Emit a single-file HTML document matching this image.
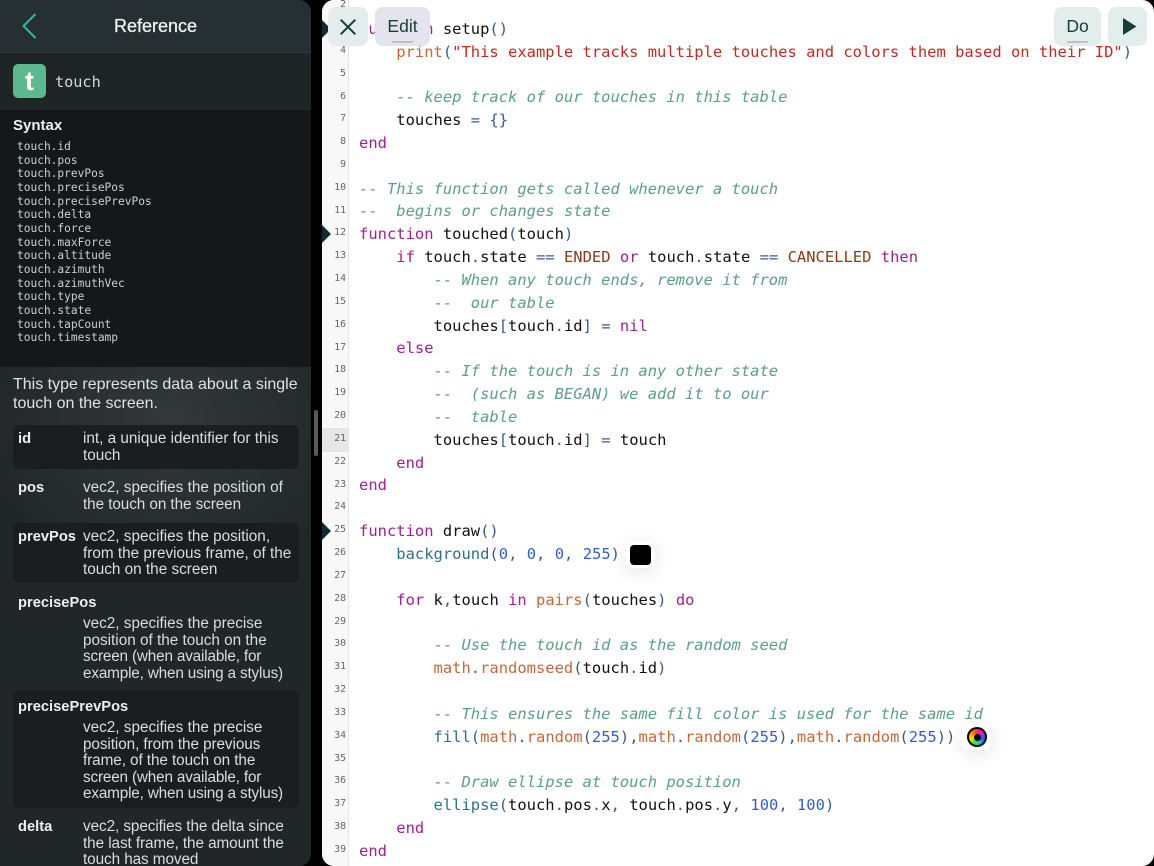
<!DOCTYPE html>
<html><head><meta charset="utf-8">
<style>
html,body{margin:0;padding:0;background:#000;width:1154px;height:866px;overflow:hidden}
*{box-sizing:border-box}
.a{position:absolute;white-space:nowrap}
#left{position:absolute;left:0;top:0;width:311px;height:866px;border-radius:0 12px 12px 0;overflow:hidden;background:radial-gradient(ellipse 190px 170px at 170px 420px,#33383a,#212629 100%),#212629;font-family:"Liberation Sans",sans-serif;color:#e4e4e4}
.row{position:absolute;left:13px;width:286px;background:#1b1e21;border-radius:6px}
.t{position:absolute;white-space:nowrap;font-size:15.3px;line-height:16.5px;color:#dcdcdc}
.b{position:absolute;left:18px;white-space:nowrap;font-size:14.7px;line-height:16.5px;font-weight:bold;color:#eee}
.x1{letter-spacing:-.17px}.x2{letter-spacing:-.08px}
#syn{position:absolute;left:17px;top:140px;font-family:"DejaVu Sans Mono",monospace;font-size:11.2px;line-height:13.65px;color:#c9d0d2;white-space:pre}
#ed{position:absolute;left:322px;top:0;width:832px;height:866px;background:#fff;border-radius:12px;overflow:hidden}
#gut{position:absolute;left:0;top:0;width:27px;height:866px;background:#f8f8f8;border-right:1px solid #e6e6e6}
#hl{position:absolute;left:0;top:428px;width:27px;height:24px;background:#e6e6e6}
#nums{position:absolute;left:0;top:-5.8px;width:26px;text-align:right;padding-right:2px;font-family:"DejaVu Sans Mono",monospace;font-size:9.8px;line-height:22.83px;color:#666;white-space:pre}
#code{position:absolute;left:37px;top:-5px;font-family:"DejaVu Sans Mono",monospace;font-size:15.48px;line-height:22.83px;color:#111;white-space:pre}
.k{color:#a0208e}.c{color:#5a9f86;font-style:italic}.s{color:#c22a20}.f{color:#c4673a}.g{color:#2d6f8e}.n{color:#2f5cd0}.p{color:#3d5a8c}.o{color:#8a3a1a}
.tri{position:absolute;left:322px;width:0;height:0;border-left:9px solid #0f2c32;border-top:9px solid transparent;border-bottom:9px solid transparent}
.btn{position:absolute;top:7px;height:39px;border-radius:8px;background:#e3edeb;color:#173f36;font-family:"Liberation Sans",sans-serif;font-size:17.5px;text-align:center;line-height:39px}
.bar{position:absolute;top:34px;height:2px;background:#b8c2c2;border-radius:1px}
.pop{position:absolute;background:#fff;border-radius:6px;box-shadow:0 4px 18px rgba(0,0,0,.1)}
.pop:before{content:"";position:absolute;left:-4px;top:9px;width:0;height:0;border-right:4px solid #fff;border-top:4px solid transparent;border-bottom:4px solid transparent}
</style></head><body>
<div id="left">
 <div style="position:absolute;left:0;top:0;width:311px;height:53px;background:#262f31;border-bottom:1px solid #31393b"></div>
 <svg style="position:absolute;left:20px;top:12px" width="20" height="28" viewBox="0 0 20 28"><path d="M15.5 2 L3.5 14 L15.5 26" fill="none" stroke="#2fb8a6" stroke-width="2"/></svg>
 <div class="a" style="left:0;width:311px;text-align:center;top:15px;font-size:18px;line-height:22px;color:#f0f0f0;-webkit-text-stroke:.3px #f0f0f0">Reference</div>
 <div style="position:absolute;left:0;top:53px;width:311px;height:57px;background:#1f2426"></div>
 <div style="position:absolute;left:13px;top:64px;width:33px;height:34px;border-radius:5px;background:#5cb98d"></div>
 <div class="a" style="left:13px;width:33px;text-align:center;top:64px;font-size:27px;line-height:34px;font-weight:bold;color:#fff">t</div>
 <div class="a" style="left:55px;top:71.5px;font-family:'DejaVu Sans Mono',monospace;font-size:15.2px;line-height:21px;color:#d8d8d8">touch</div>
 <div style="position:absolute;left:0;top:110px;width:311px;height:257px;background:#15181b"></div>
 <div class="a" style="left:13px;top:116.5px;font-size:15px;line-height:18px;font-weight:bold;color:#f0f0f0">Syntax</div>
 <div id="syn">touch.id
touch.pos
touch.prevPos
touch.precisePos
touch.precisePrevPos
touch.delta
touch.force
touch.maxForce
touch.altitude
touch.azimuth
touch.azimuthVec
touch.type
touch.state
touch.tapCount
touch.timestamp</div>
 <div class="a" style="left:13px;top:376px;font-size:16px;line-height:18.6px;color:#e2e2e2">This type represents data about a single<br>touch on the screen.</div>

 <div class="row" style="top:425px;height:44px"></div>
 <div class="row" style="top:523px;height:60px"></div>
 <div class="row" style="top:691px;height:117px"></div>

 <div class="b" style="top:431px">id</div>
 <div class="t" style="left:83px;top:431px">int, a unique identifier for this<br>touch</div>
 <div class="b" style="top:480px">pos</div>
 <div class="t" style="left:83px;top:480px">vec2, specifies the position of<br><span class="x2">the touch on the screen</span></div>
 <div class="b" style="top:529px">prevPos</div>
 <div class="t" style="left:83px;top:529px">vec2, specifies the position,<br>from the previous frame, of the<br>touch on the screen</div>
 <div class="b" style="top:595px">precisePos</div>
 <div class="t" style="left:83px;top:616px">vec2, specifies the precise<br>position of the touch on the<br><span class="x1">screen (when available, for</span><br><span class="x1">example, when using a stylus)</span></div>
 <div class="b" style="top:699px">precisePrevPos</div>
 <div class="t" style="left:83px;top:720px">vec2, specifies the precise<br><span class="x2">position, from the previous</span><br><span class="x2">frame, of the touch on the</span><br><span class="x1">screen (when available, for</span><br><span class="x1">example, when using a stylus)</span></div>
 <div class="b" style="top:819px">delta</div>
 <div class="t x2" style="left:83px;top:819px">vec2, specifies the delta since<br>the last frame, the amount the<br>touch has moved</div>
</div>
<div style="position:absolute;left:314px;top:410px;width:4px;height:46px;border-radius:2px;background:#5a5a5a"></div>

<div id="ed">
 <div id="gut"></div>
 <div id="hl"></div>
 <div id="nums">2
3
4
5
6
7
8
9
10
11
12
13
14
15
16
17
18
19
20
21
22
23
24
25
26
27
28
29
30
31
32
33
34
35
36
37
38
39</div>
 <div id="code">
<span class="k">function</span> setup<span class="p">()</span>
    <span class="f">print</span><span class="p">(</span><span class="s">"This example tracks multiple touches and colors them based on their ID"</span><span class="p">)</span>

    <span class="c">-- keep track of our touches in this table</span>
    touches <span class="p">=</span> <span class="p">{}</span>
<span class="k">end</span>

<span class="c">-- This function gets called whenever a touch</span>
<span class="c">--  begins or changes state</span>
<span class="k">function</span> touched<span class="p">(</span>touch<span class="p">)</span>
    <span class="k">if</span> touch<span class="p">.</span>state <span class="p">==</span> <span class="o">ENDED</span> <span class="k">or</span> touch<span class="p">.</span>state <span class="p">==</span> <span class="o">CANCELLED</span> <span class="k">then</span>
        <span class="c">-- When any touch ends, remove it from</span>
        <span class="c">--  our table</span>
        touches<span class="p">[</span>touch<span class="p">.</span>id<span class="p">]</span> <span class="p">=</span> <span class="k">nil</span>
    <span class="k">else</span>
        <span class="c">-- If the touch is in any other state</span>
        <span class="c">--  (such as BEGAN) we add it to our</span>
        <span class="c">--  table</span>
        touches<span class="p">[</span>touch<span class="p">.</span>id<span class="p">]</span> <span class="p">=</span> touch
    <span class="k">end</span>
<span class="k">end</span>

<span class="k">function</span> draw<span class="p">()</span>
    <span class="g">background</span><span class="p">(</span><span class="n">0</span><span class="p">,</span> <span class="n">0</span><span class="p">,</span> <span class="n">0</span><span class="p">,</span> <span class="n">255</span><span class="p">)</span>

    <span class="k">for</span> k<span class="p">,</span>touch <span class="k">in</span> <span class="f">pairs</span><span class="p">(</span>touches<span class="p">)</span> <span class="k">do</span>

        <span class="c">-- Use the touch id as the random seed</span>
        <span class="f">math</span><span class="p">.</span><span class="f">randomseed</span><span class="p">(</span>touch<span class="p">.</span>id<span class="p">)</span>

        <span class="c">-- This ensures the same fill color is used for the same id</span>
        <span class="g">fill</span><span class="p">(</span><span class="f">math</span><span class="p">.</span><span class="f">random</span><span class="p">(</span><span class="n">255</span><span class="p">),</span><span class="f">math</span><span class="p">.</span><span class="f">random</span><span class="p">(</span><span class="n">255</span><span class="p">),</span><span class="f">math</span><span class="p">.</span><span class="f">random</span><span class="p">(</span><span class="n">255</span><span class="p">))</span>

        <span class="c">-- Draw ellipse at touch position</span>
        <span class="g">ellipse</span><span class="p">(</span>touch<span class="p">.</span>pos<span class="p">.</span>x<span class="p">,</span> touch<span class="p">.</span>pos<span class="p">.</span>y<span class="p">,</span> <span class="n">100</span><span class="p">,</span> <span class="n">100</span><span class="p">)</span>
    <span class="k">end</span>
<span class="k">end</span></div>
</div>

<div class="tri" style="top:20px"></div>
<div class="tri" style="top:225px"></div>
<div class="tri" style="top:522px"></div>

<div class="pop" style="left:626px;top:541px;width:29px;height:27px"><div style="position:absolute;left:4px;top:4px;width:21px;height:20px;background:#000;border-radius:4px"></div></div>
<div class="pop" style="left:962px;top:724px;width:29px;height:26px"><div style="position:absolute;left:5px;top:3px;width:20px;height:20px;border-radius:50%;background:#000"></div><div style="position:absolute;left:7px;top:5px;width:16px;height:16px;border-radius:50%;background:conic-gradient(#ff3050,#e020d0,#3050ff,#00c8e0,#40e040,#ffe000,#ff8000,#ff3050)"></div><div style="position:absolute;left:11.5px;top:9.5px;width:7px;height:7px;border-radius:50%;background:#000"></div></div>

<div class="btn" style="left:328px;width:40px"><svg style="position:absolute;left:12px;top:12px" width="16" height="16" viewBox="0 0 16 16"><path d="M0.7 0.7 L15.3 15.3 M15.3 0.7 L0.7 15.3" stroke="#173f36" stroke-width="2" fill="none"/></svg></div>
<div class="btn" style="left:375px;width:55px;background:#e4e4ee">Edit<div class="bar" style="left:17px;width:21px"></div></div>
<div class="btn" style="left:1054px;width:47px">Do<div class="bar" style="left:13px;width:21px"></div></div>
<div class="btn" style="left:1108px;width:39px"><svg style="position:absolute;left:15px;top:11px" width="14" height="17" viewBox="0 0 14 17"><path d="M0 0 L13.5 8.5 L0 17 Z" fill="#173f36"/></svg></div>
</body></html>
